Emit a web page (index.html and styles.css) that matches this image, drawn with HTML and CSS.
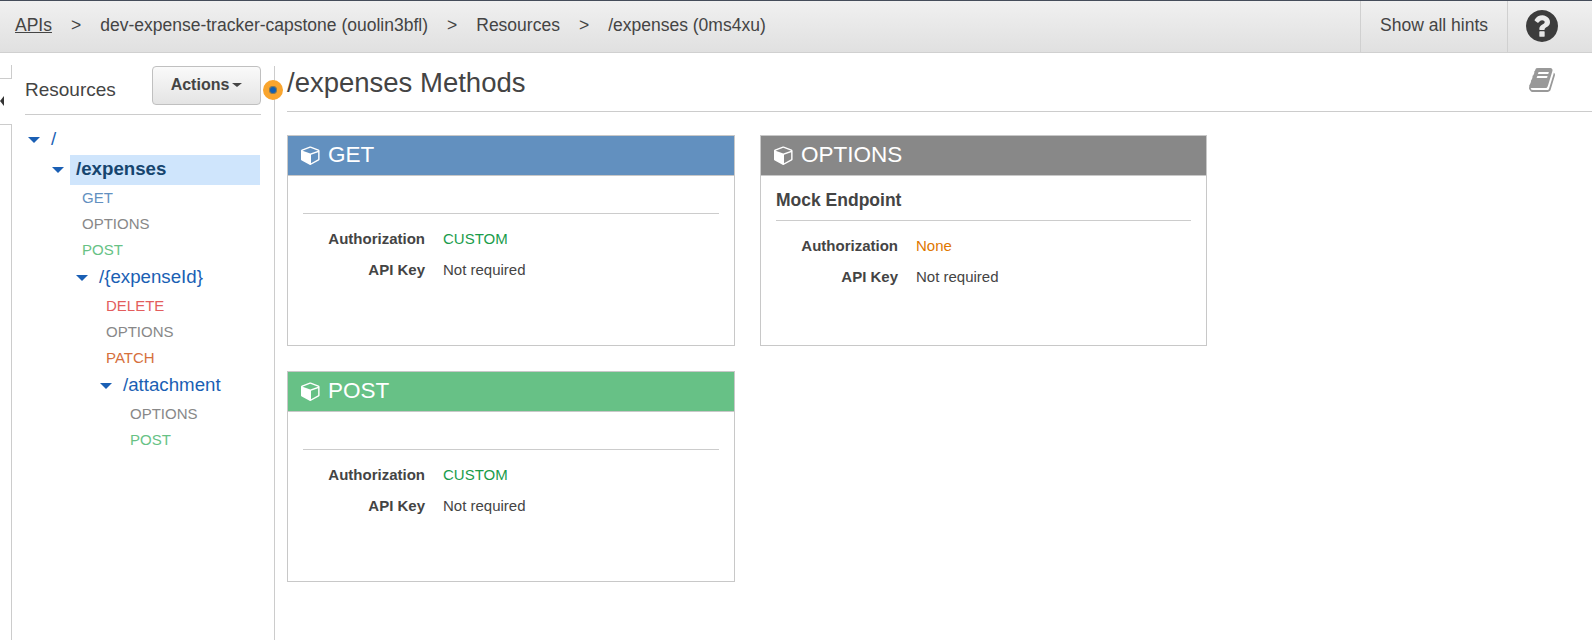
FILE: index.html
```html
<!DOCTYPE html>
<html lang="en">
<head>
    <meta charset="UTF-8">
    <title>API Gateway - /expenses Methods</title>
    <link rel="stylesheet" href="styles.css">
</head>
<body>
    <svg class="defs" width="0" height="0">
        <symbol id="cube" viewBox="0 0 1792 1792">
            <path d="M896 1629l640-349v-636l-640 233v752zm-64-865l698-254-698-254-698 254zm832-252v768q0 35-18 65t-50 47l-704 384q-28 16-61 16t-61-16l-704-384q-32-17-50-47t-18-65v-768q0-40 23-73t61-47l704-256q22-8 44-8t44 8l704 256q38 14 61 47t23 73z"/>
        </symbol>
    </svg>

    <div class="topbar">
        <div class="crumbs">
            <a class="crumb-link">APIs</a>
            <span>&gt;</span>
            <span>dev-expense-tracker-capstone (ouolin3bfl)</span>
            <span>&gt;</span>
            <span>Resources</span>
            <span>&gt;</span>
            <span>/expenses (0ms4xu)</span>
        </div>
        <div class="hints">Show all hints</div>
        <div class="help">
            <svg width="32" height="32" viewBox="128 128 1536 1536"><path d="M1024 1376v-192q0-14-9-23t-23-9h-192q-14 0-23 9t-9 23v192q0 14 9 23t23 9h192q14 0 23-9t9-23zm256-672q0-88-55.5-163t-138.5-116-170-41q-243 0-371 213-15 24 8 42l132 100q7 6 19 6 16 0 25-12 53-68 86-92 34-24 86-24 48 0 85.5 26t37.5 59q0 38-20 61t-68 45q-63 28-115.5 86.5t-52.5 125.5v36q0 14 9 23t23 9h192q14 0 23-9t9-23q0-19 21.5-49.5t54.5-49.5q32-18 49-28.5t46-35 44.5-48 28-60.5 12.5-81zm384 192q0 209-103 385.5t-279.5 279.5-385.5 103-385.5-103-279.5-279.5-103-385.5 103-385.5 279.5-279.5 385.5-103 385.5 103 279.5 279.5 103 385.5z"/></svg>
        </div>
    </div>

    <div class="main">
        <div class="rail">
            <div class="rail-box-top"></div>
            <div class="rail-arrow"></div>
            <div class="rail-box"></div>
        </div>

        <div class="sidebar">
            <div class="sidebar-head">
                <span class="sidebar-title">Resources</span>
                <button class="actions">Actions<span class="caret"></span></button>
            </div>
            <div class="focus-dot"></div>
            <ul class="tree">
                <li>
                    <div class="res"><i class="arrow"></i><span>/</span></div>
                    <ul>
                        <li>
                            <div class="res selected"><i class="arrow"></i><span>/expenses</span></div>
                            <div class="method get">GET</div>
                            <div class="method options">OPTIONS</div>
                            <div class="method post">POST</div>
                            <ul>
                                <li>
                                    <div class="res"><i class="arrow"></i><span>/{expenseId}</span></div>
                                    <div class="method delete">DELETE</div>
                                    <div class="method options">OPTIONS</div>
                                    <div class="method patch">PATCH</div>
                                    <ul>
                                        <li>
                                            <div class="res"><i class="arrow"></i><span>/attachment</span></div>
                                            <div class="method options">OPTIONS</div>
                                            <div class="method post">POST</div>
                                        </li>
                                    </ul>
                                </li>
                            </ul>
                        </li>
                    </ul>
                </li>
            </ul>
        </div>

        <div class="content">
            <div class="content-head">
                <h1>/expenses Methods</h1>
                <svg class="book" width="28" height="28" viewBox="0 0 1792 1792"><path d="M1703 478q40 57 18 129l-275 906q-19 64-76.5 107.5t-122.5 43.5h-923q-77 0-148.5-53.5t-99.5-131.5q-24-67-2-127 0-4 3-27t4-37q1-8-3-21.5t-3-19.5q2-11 8-21t16.5-23.5 16.5-23.5q23-38 45-91.5t30-91.5q3-10 .5-30t-.5-28q3-11 17-28t17-23q21-36 42-92t25-90q1-9-2.5-32t.5-28q4-13 22-30.5t22-22.5q19-26 42.5-84.5t27.5-96.5q1-8-3-25.5t-2-26.5q2-8 9-18t18-23 17-21q8-12 16.5-30.5t15-35 16-36 19.5-32 26.5-23.5 36-11.5 47.5 5.5l-1 3q38-9 51-9h761q74 0 114 56t18 130l-274 906q-36 119-71.5 153.5t-128.5 34.5h-869q-27 0-38 15-11 16-1 43 24 70 144 70h923q29 0 56-15.5t35-41.5l300-987q7-22 5-57 38 15 59 43zm-1064 2q-4 13 2 22.5t20 9.5h608q13 0 25.5-9.5t16.5-22.5l21-64q4-13-2-22.5t-20-9.5h-608q-13 0-25.5 9.5t-16.5 22.5zm-83 256q-4 13 2 22.5t20 9.5h608q13 0 25.5-9.5t16.5-22.5l21-64q4-13-2-22.5t-20-9.5h-608q-13 0-25.5 9.5t-16.5 22.5z"/></svg>
            </div>

            <div class="cards">
                <div class="card">
                    <div class="card-head head-get"><svg width="20" height="20"><use href="#cube"/></svg>GET</div>
                    <div class="card-body">
                        <div class="endpoint"></div>
                        <div class="row"><b>Authorization</b><span class="custom">CUSTOM</span></div>
                        <div class="row"><b>API Key</b><span>Not required</span></div>
                    </div>
                </div>
                <div class="card">
                    <div class="card-head head-options"><svg width="20" height="20"><use href="#cube"/></svg>OPTIONS</div>
                    <div class="card-body">
                        <div class="endpoint">Mock Endpoint</div>
                        <div class="row"><b>Authorization</b><span class="none">None</span></div>
                        <div class="row"><b>API Key</b><span>Not required</span></div>
                    </div>
                </div>
                <div class="card">
                    <div class="card-head head-post"><svg width="20" height="20"><use href="#cube"/></svg>POST</div>
                    <div class="card-body">
                        <div class="endpoint"></div>
                        <div class="row"><b>Authorization</b><span class="custom">CUSTOM</span></div>
                        <div class="row"><b>API Key</b><span>Not required</span></div>
                    </div>
                </div>
            </div>
        </div>
    </div>
</body>
</html>
```

FILE: styles.css
```css
html, body {
    margin: 0;
    height: 640px;
    overflow: hidden;
    background-color: #fff;
    font-family: "Liberation Sans", Arial, sans-serif;
    color: #444;
}
.defs {
    position: absolute;
}

/* top bar */
.topbar {
    display: flex;
    align-items: stretch;
    height: 52px;
    border-top: 1px solid #444c5a;
    background: linear-gradient(#f0f0f0, #e0e0e0);
    box-shadow: inset 0 -1px 0 #d0d0d0;
}
.crumbs {
    flex: 1;
    display: flex;
    align-items: center;
    gap: 19px;
    padding: 0 0 3px 15px;
    font-size: 17.5px;
}
.crumb-link {
    text-decoration: underline;
}
.hints {
    display: flex;
    align-items: center;
    padding: 0 19px 3px;
    font-size: 17.5px;
    border-left: 1px solid #d0d0d0;
    border-right: 1px solid #d0d0d0;
    margin-bottom: 1px;
}
.help {
    width: 84px;
    display: flex;
    align-items: center;
    padding: 0 0 2px 18px;
    box-sizing: border-box;
    fill: #3c3c3c;
}

/* body of page */
.main {
    display: flex;
    height: 587px;
}
.rail {
    width: 12px;
    flex: none;
    padding-top: 12px;
}
.rail-box-top {
    height: 13px;
    border-right: 1px solid #ccc;
    border-bottom: 1px solid #ccc;
}
.rail-arrow {
    width: 0;
    height: 0;
    margin-top: 17px;
    border-top: 5px solid transparent;
    border-bottom: 5px solid transparent;
    border-right: 4px solid #333;
}
.rail-box {
    height: 520px;
    margin-top: 18px;
    border-top: 1px solid #ccc;
    border-right: 1px solid #ccc;
}

/* sidebar */
.sidebar {
    position: relative;
    width: 263px;
    flex: none;
    margin-top: 13px;
    padding-left: 13px;
    padding-right: 13px;
    box-sizing: border-box;
    border-right: 1px solid #ccc;
}
.sidebar-head {
    display: flex;
    justify-content: space-between;
    align-items: flex-end;
    height: 48px;
    border-bottom: 1px solid #ccc;
}
.sidebar-title {
    font-size: 19px;
    margin-bottom: 13px;
}
.actions {
    align-self: flex-start;
    width: 109px;
    height: 39px;
    padding: 0 0 2px;
    border: 1px solid #c0c0c0;
    border-radius: 4px;
    background: linear-gradient(#fafafa, #e4e4e4);
    font-family: inherit;
    font-size: 16px;
    font-weight: bold;
    color: #444;
}
.caret {
    display: inline-block;
    margin-left: 3px;
    vertical-align: middle;
    border-top: 4px solid #444;
    border-left: 5px solid transparent;
    border-right: 5px solid transparent;
}
.focus-dot {
    position: absolute;
    top: 14px;
    right: -9px;
    width: 8px;
    height: 8px;
    border: 6px solid #f9a52e;
    border-radius: 50%;
    background-color: #0f5fb5;
    box-shadow: inset 0 0 0 1px #8a7a50;
}

.tree, .tree ul {
    list-style: none;
    margin: 0;
    padding: 0;
}
.tree {
    padding-top: 10px;
}
.tree ul {
    padding-left: 24px;
}
.res {
    display: flex;
    align-items: center;
    height: 30px;
    font-size: 18.7px;
    color: #1a5fb4;
}
.res span {
    padding-bottom: 2px;
}
.arrow {
    flex: none;
    width: 0;
    height: 0;
    margin: 0 11px 0 3px;
    border-top: 6px solid #1a5fb4;
    border-left: 6px solid transparent;
    border-right: 6px solid transparent;
}
.selected {
    color: #16456f;
    font-weight: bold;
}
.selected span {
    flex: 1;
    margin: 0 1px 0 -5px;
    padding: 0 0 2px 6px;
    height: 30px;
    line-height: 28px;
    box-sizing: border-box;
    background-color: #cfe5fc;
}
.method {
    height: 26px;
    line-height: 26px;
    padding-left: 33px;
    font-size: 15px;
}
.get { color: #6290c0; }
.options { color: #888; }
.post { color: #67c285; }
.delete { color: #e35d5d; }
.patch { color: #d6703c; }

/* content */
.content {
    flex: 1;
    padding-left: 12px;
}
.content-head {
    display: flex;
    justify-content: space-between;
    height: 59px;
    border-bottom: 1px solid #ccc;
    box-sizing: border-box;
}
h1 {
    margin: 15px 0 0;
    font-size: 27.5px;
    font-weight: normal;
    line-height: 30px;
    color: #444;
}
.book {
    margin: 13px 36px 0 0;
    fill: #999;
}
.cards {
    display: grid;
    grid-template-columns: 448px 447px;
    grid-auto-rows: 211px;
    gap: 25px;
    padding-top: 23px;
}
.card {
    border: 1px solid #c8c8c8;
}
.card-head {
    display: flex;
    align-items: center;
    height: 40px;
    padding: 0 0 2px 13px;
    box-sizing: border-box;
    gap: 7px;
    font-size: 22.5px;
    color: #fff;
    fill: #fff;
    border-bottom: 1px solid #c8c8c8;
}
.head-get { background-color: #6290bf; }
.head-options { background-color: #888; }
.head-post { background-color: #67c186; }
.card-body {
    padding: 0 15px;
}
.endpoint {
    padding: 14px 0 10px;
    min-height: 13px;
    line-height: 20px;
    font-size: 17.5px;
    font-weight: bold;
    border-bottom: 1px solid #ccc;
    margin-bottom: 9px;
}
.row {
    display: flex;
    height: 31px;
    line-height: 31px;
    font-size: 15px;
}
.row b {
    width: 122px;
    margin-right: 18px;
    text-align: right;
}
.custom { color: #1a9c4b; }
.none { color: #e07700; }
```
